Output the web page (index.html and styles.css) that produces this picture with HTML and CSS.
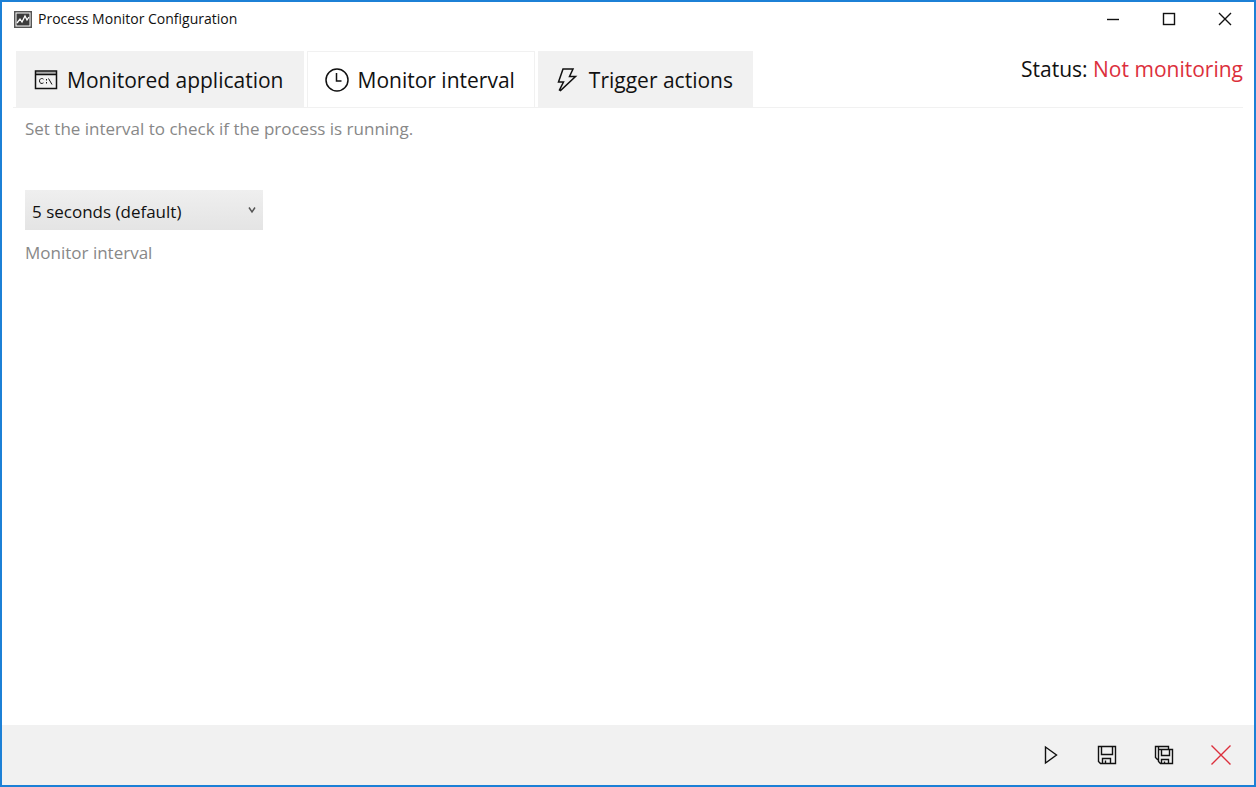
FILE: index.html
```html
<!DOCTYPE html>
<html lang="en">
<head>
    <meta charset="UTF-8">
    <meta name="viewport" content="width=device-width, initial-scale=1.0">
    <title>Process Monitor Configuration</title>
    <link rel="stylesheet" href="styles.css">
</head>
<body>
    <div class="window">
        <header class="title-bar">
            <svg class="app-icon" width="18" height="17" viewBox="0 0 18 17">
                <rect x="0.75" y="0.75" width="16.5" height="15.5" fill="#fff" stroke="#555" stroke-width="1.5"/>
                <rect x="2.5" y="2.5" width="13" height="12" fill="#3c3c3c" stroke="none"/>
                <path d="M3 12l3-4 2 3 3-6 2 4 2-3" fill="none" stroke="#fff" stroke-width="1.3"/>
            </svg>
            <h1>Process Monitor Configuration</h1>
            <div class="window-controls">
                <button type="button" aria-label="Minimize">
                    <svg width="14" height="14" viewBox="0 0 14 14"><path d="M1 7.5h12"/></svg>
                </button>
                <button type="button" aria-label="Maximize">
                    <svg width="14" height="14" viewBox="0 0 14 14"><rect x="1.5" y="1.5" width="11" height="11"/></svg>
                </button>
                <button type="button" aria-label="Close">
                    <svg width="14" height="14" viewBox="0 0 14 14"><path d="M1 1l12 12M13 1L1 13"/></svg>
                </button>
            </div>
        </header>

        <div class="tab-bar">
            <nav class="tabs" role="tablist">
                <button type="button" class="tab" role="tab" aria-selected="false">
                    <svg width="24" height="24" viewBox="0 0 24 24">
                        <path class="shade" d="M1.5 3.5h21v3h-21z"/>
                        <path d="M1.5 3h21v17.5h-21zM1.5 6.500h21"/>
                        <path class="thin" d="M9.500 11.200c-1.600-1.400-4-.6-4 1.800s2.400 3.200 4 1.800M12.500 11v1.500M12.500 14v1.500M14.500 10.500l3.500 6"/>
                    </svg>
                    Monitored application
                </button>
                <button type="button" class="tab active" role="tab" aria-selected="true">
                    <svg width="24" height="24" viewBox="0 0 24 24">
                        <circle cx="12" cy="12" r="11"/>
                        <path d="M11.5 5v8h5"/>
                    </svg>
                    Monitor interval
                </button>
                <button type="button" class="tab" role="tab" aria-selected="false">
                    <svg width="24" height="24" viewBox="0 0 24 24">
                        <path d="M7 1h10l-3.500 7.500h6L4.500 22.500l-1-.5 4-8H2.500z"/>
                    </svg>
                    Trigger actions
                </button>
            </nav>
            <p class="status">Status: <span class="status-value">Not monitoring</span></p>
        </div>

        <main class="content">
            <p class="description">Set the interval to check if the process is running.</p>
            <div class="field">
                <div class="select-wrap">
                    <select id="interval" name="interval">
                        <option>5 seconds (default)</option>
                    </select>
                    <svg class="arrow" width="8" height="8" viewBox="0 0 8 8"><path d="M1 1.5l3 4.500 3-4.500"/></svg>
                </div>
                <label for="interval">Monitor interval</label>
            </div>
        </main>

        <footer class="action-bar">
            <button type="button" aria-label="Start">
                <svg width="20" height="20" viewBox="0 0 20 20"><path d="M5.500 2v16L16.500 10z"/></svg>
            </button>
            <button type="button" aria-label="Save">
                <svg width="20" height="20" viewBox="0 0 20 20">
                    <path d="M1.500 1.500h17v17h-15l-2-2zM4.500 1.500v8h11v-8M5.500 18.500v-5h8v5M8.500 18.500v-3"/>
                </svg>
            </button>
            <button type="button" aria-label="Save and close">
                <svg width="20" height="20" viewBox="0 0 20 20">
                    <path d="M4.500 4.500h14v14h-12l-2-2zM7.500 4.500v6h8v-6M7.500 18.500v-4h7v4M10.500 18.500v-2M4.500 14.500h-1l-2-2v-11h13v3M4.500 1.500v3"/>
                </svg>
            </button>
            <button type="button" class="cancel" aria-label="Cancel">
                <svg width="20" height="20" viewBox="0 0 20 20"><path d="M0.500 0.500l19 19M19.500 0.500l-19 19"/></svg>
            </button>
        </footer>
    </div>
</body>
</html>
```

FILE: styles.css
```css
* {
    box-sizing: border-box;
}
body {
    margin: 0;
    font-family: "Segoe UI", "Open Sans", "Noto Sans", sans-serif;
    color: #111;
    background-color: #fff;
}
h1, p {
    margin: 0;
    font-weight: normal;
}
button {
    padding: 0;
    border: none;
    background: none;
    font-family: inherit;
    color: inherit;
    cursor: pointer;
}
svg {
    display: block;
    flex: none;
    fill: none;
    stroke: #111;
}

/* Window frame */
.window {
    display: flex;
    flex-direction: column;
    min-height: 100vh;
    border: 2px solid #1c80d6;
}
.title-bar {
    display: flex;
    align-items: center;
    height: 34px;
    padding: 0 1px 0 12px;
}
.title-bar h1 {
    margin-left: 6px;
    font-size: 14px;
    line-height: 20px;
}
.window-controls {
    display: flex;
    margin-left: auto;
}
.window-controls button {
    display: flex;
    align-items: center;
    justify-content: center;
    width: 56px;
    height: 34px;
}
.window-controls svg {
    stroke-width: 1.4;
}

/* Tabs */
.tab-bar {
    display: flex;
    justify-content: space-between;
    margin: 15px 11px 0;
    border-bottom: 1px solid #f1f1f1;
}
.tabs {
    display: flex;
    gap: 3px;
    margin-left: 3px;
}
.tab {
    display: flex;
    align-items: center;
    gap: 9px;
    height: 56px;
    padding: 0 19px 0 17px;
    border: 1px solid #f1f1f1;
    border-bottom: none;
    background-color: #f1f1f1;
    font-size: 21px;
    white-space: nowrap;
}
.tab.active {
    background-color: #fff;
}
.tab svg {
    stroke-width: 1.5;
}
.tab .thin {
    stroke-width: 1;
}
.tab .shade {
    fill: #aaa;
    stroke: none;
}
.status {
    padding-top: 3px;
    font-size: 21px;
    line-height: 30px;
    white-space: nowrap;
}
.status-value {
    color: #dc2f3c;
}

/* Content */
.content {
    flex: 1;
    padding: 8px 23px;
    font-size: 17px;
    line-height: 26px;
}
.description, .field label {
    color: #888;
}
.field {
    display: flex;
    flex-direction: column;
    align-items: flex-start;
    gap: 10px;
    margin-top: 48px;
}
.select-wrap {
    position: relative;
    width: 238px;
}
.select-wrap select {
    appearance: none;
    width: 100%;
    height: 40px;
    padding: 3px 24px 0 7px;
    border: none;
    border-radius: 0;
    background: linear-gradient(#efefef, #e4e4e4);
    font-family: inherit;
    font-size: 17px;
    color: #111;
}
.arrow {
    position: absolute;
    top: 16px;
    right: 7px;
    stroke: #555;
    stroke-width: 1.5;
    pointer-events: none;
}

/* Bottom action bar */
.action-bar {
    display: flex;
    justify-content: flex-end;
    gap: 17px;
    padding: 10px 13px;
    background-color: #f1f1f1;
}
.action-bar button {
    display: flex;
    align-items: center;
    justify-content: center;
    width: 40px;
    height: 40px;
}
.action-bar svg {
    stroke-width: 1.4;
}
.action-bar .cancel svg {
    stroke: #dc2f3c;
}
```
